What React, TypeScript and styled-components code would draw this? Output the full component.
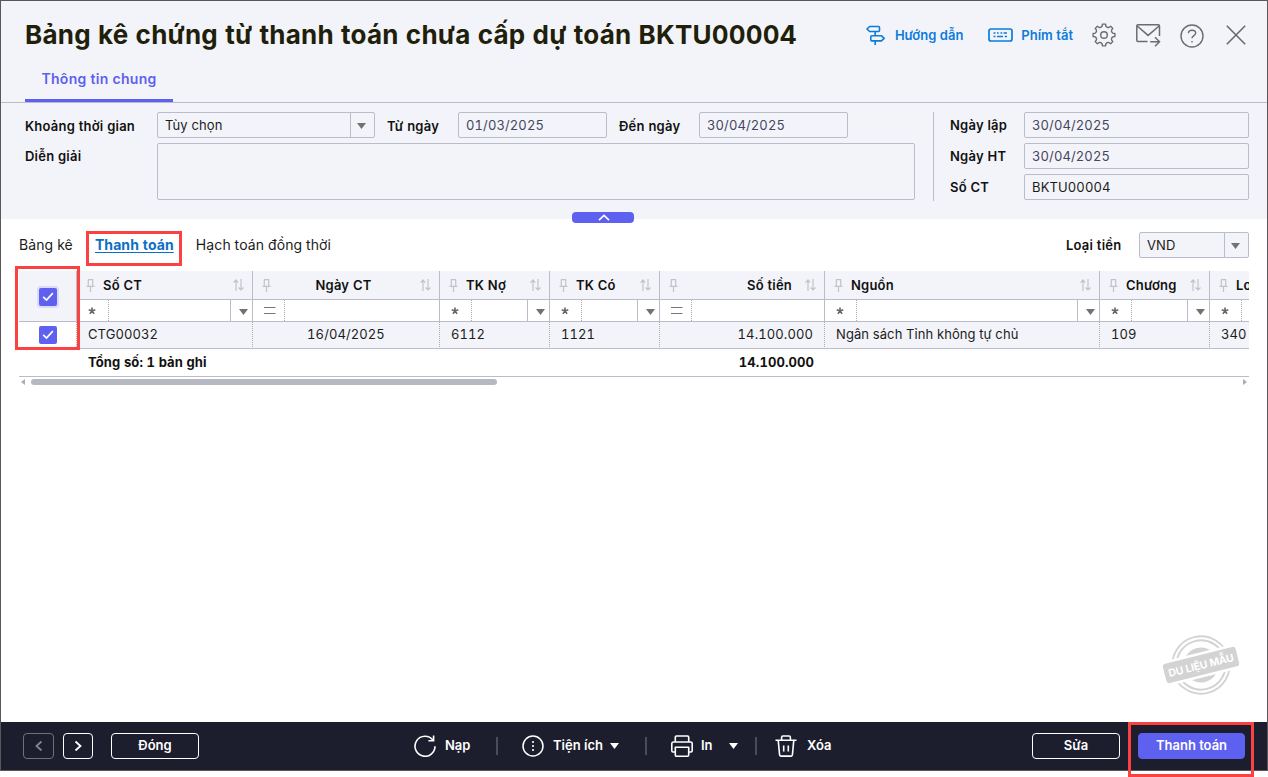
import React from "react";
import styled, { createGlobalStyle, css } from "styled-components";

const line = "#bbbcc9";
const panel = "#f3f4f9";
const accent = "#5e60ef";

const Global = createGlobalStyle`
  * { box-sizing: border-box; }
  body { margin: 0; background: #fff; overflow: hidden; }
  #root {
    font-family: Inter, "Liberation Sans", sans-serif;
    font-size: 13px;
    font-optical-sizing: none;
    font-variant-numeric: tabular-nums;
    color: #111;
  }
  svg { display: block; flex: none; }
`;

const Page = styled.div`
  position: relative;
  width: 1268px;
  height: 777px;
`;
const Window = styled.div`
  display: flex;
  flex-direction: column;
  width: 1268px;
  height: 771px;
  border: 1px solid #5b5658;
  background: #fff;
`;
const Header = styled.header`
  display: flex;
  flex-direction: column;
  height: 102px;
  flex: none;
  background: ${panel};
  border-bottom: 1px solid ${line};
  padding: 0 18px 0 24px;
`;
const TitleBar = styled.div`
  display: flex;
  align-items: center;
  justify-content: space-between;
  height: 68px;
`;
const Title = styled.h1`
  margin: 0;
  font-size: 26px;
  font-weight: 700;
  line-height: 32px;
  color: #1f1f0b;
  white-space: nowrap;
  letter-spacing: 0.22px;
`;
const Tools = styled.div`
  display: flex;
  align-items: center;
  height: 68px;
`;
const ToolLink = styled.a<{ $gap: number; $after: number }>`
  display: flex;
  align-items: center;
  gap: ${(p) => p.$gap}px;
  margin-right: ${(p) => p.$after}px;
  color: #0b7bdc;
  font-weight: 600;
  font-size: 13px;
  white-space: nowrap;
`;
const ToolButton = styled.span<{ $after?: number; $drop?: number }>`
  margin-right: ${(p) => p.$after ?? 0}px;
  padding-top: ${(p) => p.$drop ?? 0}px;
`;
const PageTab = styled.div`
  align-self: flex-start;
  width: 148px;
  height: 33px;
  border-bottom: 3px solid ${accent};
  color: ${accent};
  font-weight: 600;
  font-size: 14px;
  line-height: 20px;
  text-align: center;
  letter-spacing: 0.27px;
`;

const Form = styled.section`
  display: flex;
  flex: none;
  height: 116px;
  padding: 9px 18px 0 24px;
  background: ${panel};
`;
const FormMain = styled.div`
  width: 890px;
`;
const FormRow = styled.div`
  display: flex;
  align-items: flex-start;
  height: 31px;
`;
const Label = styled.label<{ $w: number; $drop?: number }>`
  width: ${(p) => p.$w}px;
  flex: none;
  padding-top: ${(p) => p.$drop ?? 0}px;
  line-height: 26px;
  font-weight: 600;
  white-space: nowrap;
  letter-spacing: 0.22px;
`;
const Field = styled.div<{ $w: number; $h?: number; $after?: number; $ink?: string }>`
  display: flex;
  width: ${(p) => p.$w}px;
  height: ${(p) => p.$h ?? 26}px;
  flex: none;
  margin-right: ${(p) => p.$after ?? 0}px;
  border: 1px solid ${line};
  border-radius: 2px;
  background: ${panel};
  color: ${(p) => p.$ink ?? "#1c1c1c"};
  line-height: 25px;
  padding-left: 7px;
  letter-spacing: 0.12px;
`;
const FieldArrow = styled.span`
  display: flex;
  align-items: center;
  justify-content: center;
  width: 24px;
  margin-left: auto;
  padding: 1px 2px 0 0;
  border-left: 1px solid ${line};
`;
const FormSide = styled.div`
  height: 89px;
  margin-left: 18px;
  padding-left: 16px;
  border-left: 1px solid ${line};
`;

const Content = styled.main`
  position: relative;
  display: flex;
  flex-direction: column;
  flex: 1;
  padding: 0 18px;
`;
const Collapse = styled.button`
  position: absolute;
  left: 571px;
  top: -7px;
  display: flex;
  align-items: center;
  justify-content: center;
  width: 62px;
  height: 11px;
  padding: 0 0 0 2px;
  border: 0;
  border-radius: 4px;
  background: ${accent};
`;
const DetailBar = styled.div`
  display: flex;
  align-items: center;
  height: 52px;
`;
const DetailTab = styled.a<{ $active?: boolean; $after?: number }>`
  margin-right: ${(p) => p.$after ?? 0}px;
  font-size: 14px;
  line-height: 20px;
  color: #1c1c1c;
  white-space: nowrap;
  letter-spacing: 0.1px;
  ${(p) => p.$active && css`
    color: #0b70c4;
    font-weight: 700;
    text-decoration: underline;
    text-underline-offset: 2px;
  `}
`;
const Currency = styled.div`
  display: flex;
  margin-left: auto;
`;

const Grid = styled.div`
  display: flex;
  width: 1230px;
  overflow: hidden;
`;
const Column = styled.div<{ $w: number }>`
  width: ${(p) => p.$w}px;
  flex: none;
`;
const Head = styled.div`
  display: flex;
  align-items: center;
  height: 29px;
  padding: 0 8px 0 9px;
  background: ${panel};
  border-right: 1px solid ${line};
  border-bottom: 1px solid ${line};
`;
const HeadText = styled.span<{ $align?: string }>`
  flex: 1;
  padding: 0 ${(p) => (p.$align === "center" ? 12 : 13)}px 1px 8px;
  font-weight: 600;
  text-align: ${(p) => p.$align ?? "left"};
  white-space: nowrap;
  letter-spacing: 0.2px;
`;
const Filter = styled.div`
  display: flex;
  height: 22px;
  border-right: 1px solid ${line};
  border-bottom: 1px solid ${line};
`;
const Operator = styled.span`
  display: flex;
  align-items: center;
  width: 32px;
  padding-left: 11px;
  border-right: 1px dotted #aaa;
`;
const FilterArrow = styled.span`
  display: flex;
  align-items: center;
  justify-content: flex-end;
  width: 22px;
  margin-left: auto;
  padding: 2px 4px 0 0;
  border-left: 1px solid ${line};
`;
const Cell = styled.div<{ $align?: string; $plain?: boolean }>`
  height: 27px;
  padding: 0 11px;
  background: ${(p) => (p.$plain ? "#fff" : panel)};
  border-right: 1px dotted #aaa;
  border-bottom: 1px solid ${line};
  line-height: 25px;
  text-align: ${(p) => p.$align ?? "left"};
  white-space: nowrap;
  color: #1c1c1c;
  letter-spacing: 0.1px;
`;
const Total = styled.div<{ $align?: string }>`
  height: 28px;
  padding: 0 11px 0 11px;
  border-bottom: 1px solid ${line};
  line-height: 27px;
  font-weight: 700;
  text-align: ${(p) => p.$align ?? "left"};
  white-space: nowrap;
  letter-spacing: 0.1px;
`;
const SelectAll = styled.div`
  display: flex;
  align-items: center;
  justify-content: center;
  height: 51px;
  padding-top: 1px;
  background: ${panel};
  border-right: 1px solid ${line};
  border-bottom: 1px solid ${line};
`;
const SelectRow = styled(Cell)`
  display: flex;
  align-items: center;
  justify-content: center;
  padding: 0;
`;
const Box = styled.span<{ $focus?: boolean }>`
  display: flex;
  align-items: center;
  justify-content: center;
  width: 18px;
  height: 18px;
  border-radius: 2px;
  background: ${accent};
  box-shadow: ${(p) => (p.$focus ? "0 0 0 2px #dadbfb" : "none")};
`;
const ScrollBar = styled.div`
  display: flex;
  align-items: center;
  justify-content: space-between;
  height: 10px;
  padding: 0 2px;
`;
const Thumb = styled.div`
  width: 466px;
  height: 6px;
  margin: 0 auto 0 6px;
  border-radius: 3px;
  background: #b6b9c2;
`;
const Stamp = styled.div`
  position: absolute;
  right: 24px;
  bottom: 24px;
`;

const Footer = styled.footer`
  display: flex;
  flex: none;
  align-items: center;
  height: 48px;
  padding: 0 22px;
  background: #1d1e2d;
  color: #fff;
`;
const FooterButton = styled.button<{ $w: number; $after?: number; $dim?: boolean; $primary?: boolean }>`
  display: flex;
  align-items: center;
  justify-content: center;
  width: ${(p) => p.$w}px;
  height: 26px;
  margin: 0 ${(p) => p.$after ?? 0}px 0 0;
  padding: 0 0 2px;
  border: 1px solid ${(p) => (p.$primary ? accent : p.$dim ? "#70707c" : "#fff")};
  border-radius: 4px;
  background: ${(p) => (p.$primary ? accent : "transparent")};
  color: ${(p) => (p.$dim ? "#85858f" : "#fff")};
  font: 600 13px Inter, sans-serif;
`;
const Action = styled.div<{ $gap: number; $w: number }>`
  display: flex;
  align-items: center;
  gap: ${(p) => p.$gap}px;
  width: ${(p) => p.$w}px;
  font-weight: 600;
  white-space: nowrap;
`;
const ActionText = styled.span<{ $after?: number }>`
  padding-bottom: 2px;
  margin-right: ${(p) => p.$after ?? 0}px;
`;
const Separator = styled.i<{ $after?: number }>`
  width: 2px;
  height: 18px;
  margin-right: ${(p) => p.$after ?? 24}px;
  background: #4b4c5a;
`;
const Spacer = styled.div<{ $w?: number }>`
  width: ${(p) => p.$w ?? 0}px;
  flex: ${(p) => (p.$w ? "none" : 1)};
`;
const Callout = styled.div<{ $x: number; $y: number; $w: number; $h: number }>`
  position: absolute;
  left: ${(p) => p.$x}px;
  top: ${(p) => p.$y}px;
  width: ${(p) => p.$w}px;
  height: ${(p) => p.$h}px;
  border: 3px solid #fb4141;
`;

const Triangle = ({ w = 9, h = 6, color = "#727272" }: { w?: number; h?: number; color?: string }) => (
  <svg width={w} height={h} viewBox="0 0 9 6"><path d="M0 0h9L4.5 6z" fill={color} /></svg>
);
const Check = () => (
  <svg width="12" height="10" viewBox="0 0 12 10" fill="none" stroke="#fff" strokeWidth="1.7"><path d="M1.2 4.8 4.5 8 10.8 1.2" /></svg>
);
const Pin = () => (
  <svg width="9" height="13" viewBox="0 0 9 13" fill="none" stroke="#c2c3ca" strokeWidth="1.2"><path d="M2 .6h5M2.3.6v6.2M6.7.6v6.2M.5 7.4h8M4.5 7.4V13" /></svg>
);
const Sort = () => (
  <svg width="11" height="12" viewBox="0 0 11 12" fill="none" stroke="#c2c3ca" strokeWidth="1.2"><path d="M3 12V1M.5 3.6 3 1l2.2 2.6M8 0v11M5.6 8.5 8 11l2.5-2.5" /></svg>
);
const Star = () => (
  <svg width="8" height="8" viewBox="0 0 8 8" stroke="#666" strokeWidth="1.6"><path d="M4 .6V4M.7 2.8 4 4l3.3-1.2M1.9 6.8 4 4l2.1 2.8" fill="none" /></svg>
);
const Equal = () => (
  <svg width="12" height="7" viewBox="0 0 12 7"><path d="M0 .5h11.5M0 6.5h11.5" stroke="#777" strokeWidth="1" /></svg>
);
const Chevron = ({ d }: { d: string }) => (
  <svg width="10" height="12" viewBox="0 0 10 12" fill="none" stroke="currentColor" strokeWidth="1.8"><path d={d} /></svg>
);

const Signpost = () => (
  <svg width="20" height="20" viewBox="0 0 20 20" fill="none" stroke="#0b7bdc" strokeWidth="1.6" strokeLinejoin="round">
    <path d="M3.6 1.5h8.9a1 1 0 0 1 1 1v3a1 1 0 0 1-1 1H3.6L1 4zM5.8 10.7h9.6l2.8 2.6-2.8 2.6H5.8a1 1 0 0 1-1-1v-3.2a1 1 0 0 1 1-1zM9.2 6.5v4.2M9.2 15.9V20" />
  </svg>
);
const Keyboard = () => (
  <svg width="25" height="14" viewBox="0 0 25 14" fill="none" stroke="#0b7bdc">
    <rect x="1" y="1" width="23" height="12" rx="2" strokeWidth="1.7" />
    <path d="M5.5 5h2M9 5h1.7M12.5 5h1.7M15.5 5H19M5.5 8.5h2M9 8.5h6M16.8 8.5H19" strokeWidth="1.3" />
  </svg>
);

const polar = (deg: number, r: number) => {
  const a = (deg * Math.PI) / 180;
  return `${(12 + r * Math.sin(a)).toFixed(2)} ${(12 - r * Math.cos(a)).toFixed(2)}`;
};
const gearPath =
  Array.from({ length: 8 }, (_, i) => {
    const a = i * 45;
    return `${i ? "L" : "M"}${polar(a - 8, 11)}L${polar(a + 8, 11)}L${polar(a + 12, 9)}A2.7 2.7 0 0 0 ${polar(a + 33, 9)}`;
  }).join("") + "Z";
const Gear = () => (
  <svg width="24" height="24" viewBox="0 0 24 24" fill="none" stroke="#6c6c6c" strokeWidth="1.4" strokeLinejoin="round">
    <circle cx="12" cy="12" r="3.3" />
    <path d={gearPath} />
  </svg>
);
const Mail = () => (
  <svg width="25" height="23" viewBox="0 0 25 23" fill="none" stroke="#6c6c6c" strokeWidth="1.5">
    <path d="M11.5 17.5H2a1.2 1.2 0 0 1-1.2-1.2V2A1.2 1.2 0 0 1 2 .8h20.3A1.2 1.2 0 0 1 23.5 2v10M1.2 2l10.9 9.4L23.1 2M14.2 17.7h9M19 13.3l4.5 4.4-4.5 4.5" />
  </svg>
);
const Help = () => (
  <svg width="24" height="24" viewBox="0 0 24 24" fill="none" stroke="#6c6c6c" strokeWidth="1.4">
    <circle cx="12" cy="12" r="11" />
    <path d="M8.4 9.3C8.5 7.5 10 6.3 12 6.3s3.7 1.2 3.7 2.8c0 2.6-3.7 2.4-3.7 5.1M12 17v1.4" />
  </svg>
);
const Close = () => (
  <svg width="20" height="20" viewBox="0 0 20 20"><path d="m.8.8 18.4 18.4M19.2.8.8 19.2" stroke="#666" strokeWidth="1.5" /></svg>
);
const Reload = () => (
  <svg width="22" height="22" viewBox="0 0 22 22" fill="none" stroke="#fff" strokeWidth="1.6">
    <path d="M21 11.2A10 10 0 1 1 18.8 5M19.6.5v5.2h-5.2" />
  </svg>
);
const More = () => (
  <svg width="22" height="22" viewBox="0 0 22 22" fill="none" stroke="#fff">
    <circle cx="11" cy="11" r="10" strokeWidth="1.5" />
    <path d="M11 6v2M11 10v2M11 14v2" strokeWidth="1.6" />
  </svg>
);
const Printer = () => (
  <svg width="22" height="22" viewBox="0 0 22 22" fill="none" stroke="#fff" strokeWidth="1.6" strokeLinejoin="round">
    <path d="M4.3 7V2.2A1.2 1.2 0 0 1 5.5 1h11a1.2 1.2 0 0 1 1.2 1.2V7M4.3 17H2a1.2 1.2 0 0 1-1.2-1.2V8.6A1.6 1.6 0 0 1 2.4 7h17.2a1.6 1.6 0 0 1 1.6 1.6v7.2A1.2 1.2 0 0 1 20 17h-2.3M4.3 12.3h13.4V20a1.2 1.2 0 0 1-1.2 1.2h-11A1.2 1.2 0 0 1 4.3 20z" />
  </svg>
);
const Trash = () => (
  <svg width="22" height="22" viewBox="0 0 22 22" fill="none" stroke="#fff" strokeWidth="1.6" strokeLinejoin="round">
    <path d="M.5 5.2h21M6.6 5V2.4A1.4 1.4 0 0 1 8 1h6a1.4 1.4 0 0 1 1.4 1.4V5M3.2 5.2 4.6 20a1.2 1.2 0 0 0 1.2 1.1h10.4a1.2 1.2 0 0 0 1.2-1.1l1.4-14.8M8.7 10.5v6M13.3 10.5v6" />
  </svg>
);
const SampleStamp = () => (
  <svg width="84" height="66" viewBox="0 0 84 66">
    <g transform="rotate(-14 42 33)" fill="none" stroke="#d3d3d3">
      <circle cx="42" cy="33" r="28.7" strokeWidth="1.8" />
      <circle cx="42" cy="33" r="24.6" strokeWidth="2" />
      <circle cx="42" cy="33" r="17.5" fill="#d3d3d3" stroke="none" />
      <rect x="2.5" y="20.5" width="79" height="25" rx="3" fill="#fff" stroke="none" />
      <rect x="4.5" y="23" width="75" height="20" rx="3" fill="#d3d3d3" stroke="none" />
      <text x="42" y="37" textAnchor="middle" textLength="67" fontFamily="Inter, sans-serif" fontSize="10.5" fontWeight="700" fill="#fff" stroke="none">DU LIỆU MẪU</text>
    </g>
  </svg>
);

type Col = { w: number; title: string; value: string; op: "*" | "="; align?: string; total?: React.ReactNode };
const columns: Col[] = [
  { w: 176, title: "Số CT", value: "CTG00032", op: "*", total: "Tổng số: 1 bản ghi" },
  { w: 187, title: "Ngày CT", value: "16/04/2025", op: "=", align: "center" },
  { w: 110, title: "TK Nợ", value: "6112", op: "*" },
  { w: 110, title: "TK Có", value: "1121", op: "*" },
  { w: 165, title: "Số tiền", value: "14.100.000", op: "=", align: "right", total: "14.100.000" },
  { w: 275, title: "Nguồn", value: "Ngân sách Tỉnh không tự chủ", op: "*" },
  { w: 110, title: "Chương", value: "109", op: "*" },
  { w: 110, title: "Loại", value: "340", op: "*" },
];

const DateField = ({ w, after, children }: { w: number; after?: number; children: string }) => (
  <Field $w={w} $after={after} $ink="#44465f">{children}</Field>
);

export default function App() {
  return (
    <Page>
      <Global />
      <Window>
        <Header>
          <TitleBar>
            <Title>Bảng kê chứng từ thanh toán chưa cấp dự toán BKTU00004</Title>
            <Tools>
              <ToolLink $gap={9} $after={25}><Signpost />Hướng dẫn</ToolLink>
              <ToolLink $gap={8} $after={19}><Keyboard />Phím tắt</ToolLink>
              <ToolButton $after={20}><Gear /></ToolButton>
              <ToolButton $after={19}><Mail /></ToolButton>
              <ToolButton $after={22} $drop={2}><Help /></ToolButton>
              <ToolButton $after={3}><Close /></ToolButton>
            </Tools>
          </TitleBar>
          <PageTab>Thông tin chung</PageTab>
        </Header>

        <Form>
          <FormMain>
            <FormRow>
              <Label $w={132} $drop={1}>Khoảng thời gian</Label>
              <Field $w={218} $after={12}>Tùy chọn<FieldArrow><Triangle /></FieldArrow></Field>
              <Label $w={71} $drop={1}>Từ ngày</Label>
              <DateField w={149} after={12}>01/03/2025</DateField>
              <Label $w={80} $drop={1}>Đến ngày</Label>
              <DateField w={149}>30/04/2025</DateField>
            </FormRow>
            <FormRow>
              <Label $w={132}>Diễn giải</Label>
              <Field $w={758} $h={57} />
            </FormRow>
          </FormMain>
          <FormSide>
            <FormRow><Label $w={74}>Ngày lập</Label><DateField w={225}>30/04/2025</DateField></FormRow>
            <FormRow><Label $w={74}>Ngày HT</Label><DateField w={225}>30/04/2025</DateField></FormRow>
            <FormRow><Label $w={74}>Số CT</Label><Field $w={225}>BKTU00004</Field></FormRow>
          </FormSide>
        </Form>

        <Content>
          <Collapse>
            <svg width="12" height="7" viewBox="0 0 12 7" fill="none" stroke="#fff" strokeWidth="1.6"><path d="M1 6.2 6 1.4l5 4.8" /></svg>
          </Collapse>
          <DetailBar>
            <DetailTab $after={22}>Bảng kê</DetailTab>
            <DetailTab $active $after={22}>Thanh toán</DetailTab>
            <DetailTab>Hạch toán đồng thời</DetailTab>
            <Currency>
              <Label $w={73}>Loại tiền</Label>
              <Field $w={110}>VND<FieldArrow><Triangle /></FieldArrow></Field>
            </Currency>
          </DetailBar>
          <Grid>
            <Column $w={58}>
              <SelectAll><Box $focus><Check /></Box></SelectAll>
              <SelectRow $plain><Box><Check /></Box></SelectRow>
              <Total />
            </Column>
            {columns.map((c) => (
              <Column key={c.title} $w={c.w}>
                <Head><Pin /><HeadText $align={c.align}>{c.title}</HeadText><Sort /></Head>
                <Filter>
                  <Operator>{c.op === "*" ? <Star /> : <Equal />}</Operator>
                  {c.op === "*" && <FilterArrow><Triangle /></FilterArrow>}
                </Filter>
                <Cell $align={c.align}>{c.value}</Cell>
                <Total $align={c.align}>{c.total}</Total>
              </Column>
            ))}
          </Grid>
          <ScrollBar>
            <svg width="4" height="6" viewBox="0 0 4 6"><path d="M4 0v6L0 3z" fill="#aaacb5" /></svg>
            <Thumb />
            <svg width="4" height="6" viewBox="0 0 4 6"><path d="M0 0v6l4-3z" fill="#aaacb5" /></svg>
          </ScrollBar>
          <Stamp><SampleStamp /></Stamp>
        </Content>

        <Footer>
          <FooterButton $w={31} $after={9} $dim><Chevron d="M7.5 2.5 2.5 7l5 4.5" /></FooterButton>
          <FooterButton $w={30} $after={18}><Chevron d="m2.5 2.5 5 4.5-5 4.5" /></FooterButton>
          <FooterButton $w={88}>Đóng</FooterButton>
          <Spacer $w={215} />
          <Action $gap={9} $w={82}><Reload /><ActionText>Nạp</ActionText></Action>
          <Separator />
          <Action $gap={9} $w={123}><More /><ActionText $after={-2}>Tiện ích</ActionText><Triangle color="#fff" /></Action>
          <Separator />
          <Action $gap={8} $w={84}><Printer /><ActionText>In</ActionText><Spacer /><Triangle color="#fff" /><Spacer $w={14} /></Action>
          <Separator $after={18} />
          <Action $gap={10} $w={60}><Trash /><ActionText>Xóa</ActionText></Action>
          <Spacer />
          <FooterButton $w={88} $after={18}>Sửa</FooterButton>
          <FooterButton $w={107} $primary>Thanh toán</FooterButton>
        </Footer>
      </Window>
      <Callout $x={86} $y={231} $w={96} $h={35} />
      <Callout $x={15} $y={266} $w={65} $h={84} />
      <Callout $x={1128} $y={722} $w={126} $h={55} />
    </Page>
  );
}
